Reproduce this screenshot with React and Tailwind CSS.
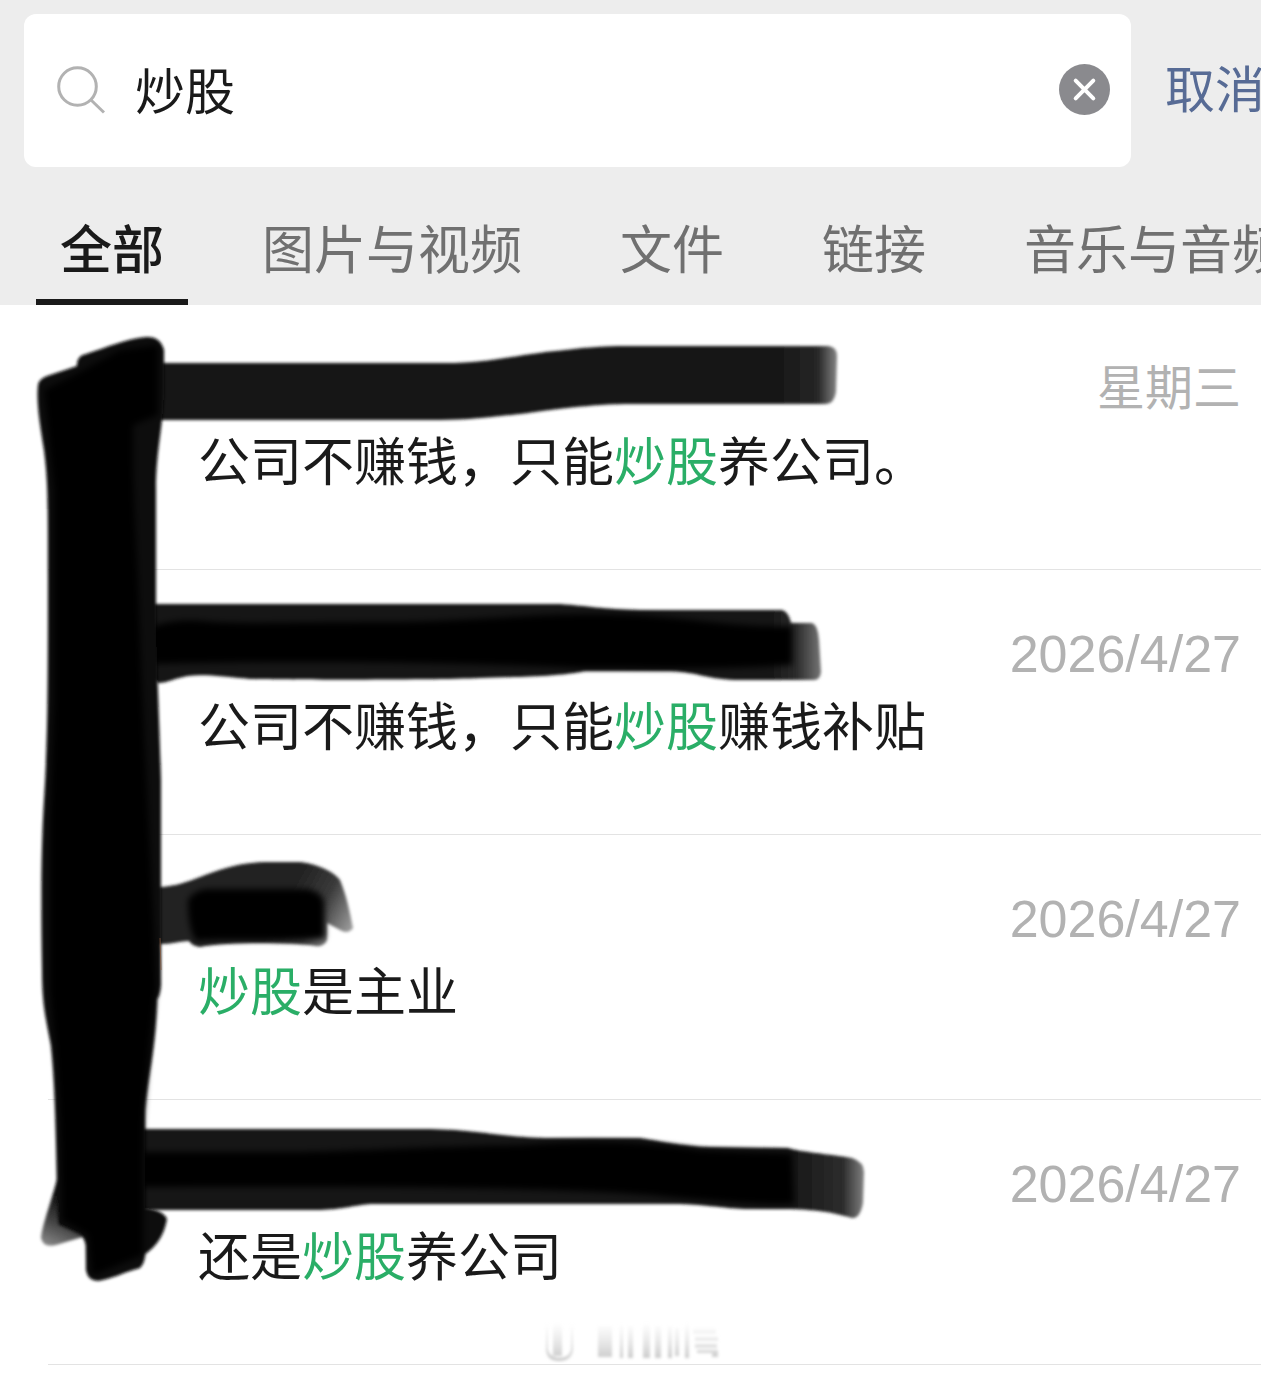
/**
 * Chat history search page
 */
import React, { useState } from 'react'
import clsx from 'clsx'

const TABS = ['全部', '图片与视频', '文件', '链接', '音乐与音频']

const RESULTS = [
  { id: 1, date: '星期三', text: '公司不赚钱，只能炒股养公司。' },
  { id: 2, date: '2026/4/27', text: '公司不赚钱，只能炒股赚钱补贴' },
  { id: 3, date: '2026/4/27', text: '炒股是主业' },
  { id: 4, date: '2026/4/27', text: '还是炒股养公司' },
]

const KEYWORD = '炒股'

function SearchIcon() {
  return (
    <svg className="w-12 h-12 shrink-0" viewBox="0 0 48 48" fill="none" stroke="#b2b2b2" strokeWidth="3" aria-hidden="true">
      <circle cx="20.5" cy="20.5" r="18.8" />
      <path d="M34 34 L47 46.5" />
    </svg>
  )
}

function ClearIcon() {
  return (
    <svg className="w-full h-full" viewBox="0 0 51 51" aria-hidden="true">
      <circle cx="25.5" cy="25.5" r="25.5" fill="#8a8a8e" />
      <path d="M16.7 16.7 L34.3 34.3 M34.3 16.7 L16.7 34.3" stroke="#fff" strokeWidth="4" strokeLinecap="round" />
    </svg>
  )
}

// Colours every occurrence of the keyword green
function Highlight({ text }) {
  const parts = text.split(KEYWORD)
  return parts.map((part, i) => (
    <React.Fragment key={i}>
      {i > 0 && <mark className="bg-transparent text-[#2aae67]">{KEYWORD}</mark>}
      {part}
    </React.Fragment>
  ))
}

// Marker strokes that hide avatars and names
function MarkerStrokes() {
  return (
    <svg
      className="absolute left-0 top-0 w-[1261px] h-[1068px] pointer-events-none"
      viewBox="0 305 1261 1068"
      aria-hidden="true"
    >
      <defs>
        <filter id="soft" x="-5%" y="-5%" width="110%" height="110%">
          <feGaussianBlur stdDeviation="1.6" />
        </filter>
        <filter id="softer" x="-20%" y="-20%" width="140%" height="140%">
          <feGaussianBlur stdDeviation="3" />
        </filter>
        <linearGradient id="fade1" gradientUnits="userSpaceOnUse" x1="770" y1="0" x2="838" y2="0">
          <stop offset="0" stopColor="#141414" />
          <stop offset="0.7" stopColor="#262626" />
          <stop offset="1" stopColor="#888" />
        </linearGradient>
        <linearGradient id="fade2" gradientUnits="userSpaceOnUse" x1="770" y1="0" x2="822" y2="0">
          <stop offset="0" stopColor="#161616" />
          <stop offset="0.5" stopColor="#2b2b2b" />
          <stop offset="1" stopColor="#777" />
        </linearGradient>
        <linearGradient id="fade3" gradientUnits="userSpaceOnUse" x1="290" y1="890" x2="352" y2="925">
          <stop offset="0" stopColor="#222" />
          <stop offset="0.5" stopColor="#3a3a3a" />
          <stop offset="1" stopColor="#999" />
        </linearGradient>
        <linearGradient id="fade4" gradientUnits="userSpaceOnUse" x1="790" y1="0" x2="866" y2="0">
          <stop offset="0" stopColor="#161616" />
          <stop offset="0.7" stopColor="#2d2d2d" />
          <stop offset="1" stopColor="#888" />
        </linearGradient>
        <linearGradient id="tail" gradientUnits="userSpaceOnUse" x1="46" y1="1246" x2="66" y2="1200">
          <stop offset="0" stopColor="#8a8a8a" />
          <stop offset="0.5" stopColor="#444" />
          <stop offset="1" stopColor="#111" />
        </linearGradient>
        <linearGradient id="smear" gradientUnits="userSpaceOnUse" x1="0" y1="1322" x2="0" y2="1360">
          <stop offset="0" stopColor="#ddd" stopOpacity="0" />
          <stop offset="1" stopColor="#c8c8c8" />
        </linearGradient>
      </defs>

      {/* name strokes */}
      <g filter="url(#soft)">
        <path fill="url(#fade1)" d="M140 363 H455 C500 361 520 354 565 350 C590 347 605 346 625 346 H828 Q838 347 837 358 L836 392 Q834 404 826 404 H625 C580 405 545 411 520 414 C490 417 470 420 440 420 H140 Z" />
        <path fill="url(#fade2)" d="M140 604 H560 C590 606 600 609 640 610 H782 Q789 612 791 623 H812 Q818 625 819 640 L821 672 Q820 680 814 680 H735 C705 679 695 671 665 671 H585 C560 677 510 677 480 678 C440 680 300 680 250 679 C225 677 205 674 188 676 C175 678 168 683 158 683 L140 670 Z" />
        <path fill="url(#fade3)" d="M145 888 C175 887 185 883 205 875 C230 866 245 862 270 862 H300 C318 864 334 872 340 880 C346 894 350 912 353 928 Q348 935 340 930 L327 923 V940 Q324 947 316 946 C290 942 225 942 200 947 Q192 946 189 941 C180 941 172 944 164 944 H145 Z" />
        <path fill="url(#fade4)" d="M130 1129 H430 C480 1130 500 1137 545 1138 H640 C660 1141 680 1146 710 1147 L788 1148 C800 1152 830 1154 852 1158 Q864 1162 864 1172 L863 1203 Q860 1219 852 1218 C835 1213 820 1210 790 1209 H745 C720 1208 710 1205 680 1204 H370 C350 1206 345 1209 320 1210 H130 Z" />
      </g>
      <g filter="url(#softer)" fill="#000">
        <path d="M140 632 C170 618 190 620 215 622 C250 624 300 622 400 622 C480 620 530 614 600 614 C680 614 720 628 792 626 V665 C700 670 640 668 580 668 C460 662 300 660 150 664 Z" />
        <path d="M188 900 Q192 892 205 889 H308 Q322 892 324 902 L325 938 C300 942 225 938 196 941 Q188 930 188 900 Z" />
        <path d="M130 1152 H300 C380 1150 420 1147 520 1145 C600 1139 650 1142 700 1150 L792 1153 L794 1204 C760 1206 720 1201 680 1198 C600 1188 420 1186 130 1187 Z" />
      </g>

      {/* avatar column */}
      <g filter="url(#soft)">
        <path fill="url(#tail)" d="M60 1165 C56 1190 43 1220 41 1238 Q43 1248 56 1245 L86 1236 L110 1190 Z" />
        <path fill="#0c0c0c" d="M38 385 Q39 378 50 375 L77 366 Q76 356 86 354 C108 347 125 339 146 337 Q160 336 164 350 V390 C163 430 156 450 156 490 V600 C156 660 159 700 161 780 V985 Q160 996 157 999 C156 1050 148 1075 145 1110 V1208 Q163 1210 167 1219 C164 1236 156 1247 145 1254 Q145 1263 140 1268 C122 1273 112 1279 98 1281 Q88 1281 86 1270 V1245 Q84 1236 78 1234 L58 1225 C56 1150 56 1090 51 1045 C46 1020 42 1005 42 970 C41 900 41 850 44 800 C48 740 48 680 48 580 C48 500 48 480 44 450 C41 430 36 405 38 385 Z" />
      </g>
      <path filter="url(#softer)" fill="#000" d="M44 390 L80 372 L120 350 L158 345 L158 415 L133 425 C132 500 138 560 139 610 C144 760 154 900 156 990 L150 1040 L143 1120 V1255 L92 1276 L88 1235 L62 1220 C62 1100 54 1040 50 990 V820 L54 700 V490 Z" />
      <path d="M160 938 L161 970" stroke="#8b5a3c" strokeWidth="1" opacity="0.7" />

      {/* washed-out stamp at the bottom */}
      <g filter="url(#soft)" fill="url(#smear)">
        <rect x="553" y="1322" width="9" height="34" />
        <path d="M546 1322 h2 v28 q3 8 11 8 q10 0 12 -8 v-28 h2 v28 q-2 11 -14 11 q-12 0 -13 -11 z" />
        <rect x="598" y="1326" width="14" height="31" />
        <rect x="620" y="1324" width="3" height="34" />
        <rect x="628" y="1326" width="5" height="32" />
        <rect x="643" y="1324" width="7" height="34" />
        <rect x="655" y="1326" width="6" height="32" />
        <rect x="668" y="1326" width="4" height="32" />
        <rect x="675" y="1328" width="4" height="28" />
        <rect x="685" y="1324" width="4" height="34" />
        <path d="M693 1329 h23 v5 h-23 z M695 1337 h23 v4 h-23 z M695 1344 h22 v4 h-22 z M697 1350 h21 v7 h-6 v-4 h-15 z" />
      </g>
    </svg>
  )
}

export default function App() {
  const [query, setQuery] = useState(KEYWORD)
  const [active, setActive] = useState(TABS[0])

  return (
    <div className="min-h-screen overflow-hidden bg-white text-[#1a1a1a] font-['Liberation_Sans','Noto_Sans_CJK_SC',sans-serif]">
      <header className="bg-[#ededed]">
        {/* Search bar */}
        <div className="flex items-center gap-[34px] pl-6 pt-[14px]">
          <label className="flex flex-1 min-w-0 items-center h-[153px] rounded-xl bg-white pl-[33px] pr-[21px] pb-[2px]">
            <SearchIcon />
            <input
              type="text"
              aria-label="搜索"
              value={query}
              onChange={(e) => setQuery(e.target.value)}
              className="flex-1 min-w-0 h-20 ml-[30px] pb-1 bg-transparent text-[50px] outline-none"
            />
            <button type="button" aria-label="清除" onClick={() => setQuery('')} className="w-[51px] h-[51px] shrink-0">
              <ClearIcon />
            </button>
          </label>
          <button type="button" className="w-24 shrink-0 whitespace-nowrap text-left text-[50px] leading-[72px] text-[#576b95]">
            取消
          </button>
        </div>

        {/* Filter tabs */}
        <div role="tablist" className="flex gap-[50px] pl-9 pt-12">
          {TABS.map((tab) => (
            <button
              key={tab}
              type="button"
              role="tab"
              aria-selected={active === tab}
              onClick={() => setActive(tab)}
              className={clsx(
                'shrink-0 px-6 pb-3 border-b-6 text-[52px] leading-[72px]',
                active === tab ? 'border-[#1a1a1a] font-medium' : 'border-transparent text-[#707070]'
              )}
            >
              {tab}
            </button>
          ))}
        </div>
      </header>

      <main className="relative">
        <ul>
          {RESULTS.map((item) => (
            <li key={item.id} className="ml-12 h-[265px] pt-[60px] pl-[150px] pr-5 border-b border-[#e3e3e3]">
              <div className={clsx('flex justify-end leading-[48px] text-[#b2b2b2]', item.date.includes('/') ? 'text-[52px]' : 'text-[48px]')}>
                <time>{item.date}</time>
              </div>
              <p className="mt-[14px] truncate text-[52px] leading-[72px]">
                <Highlight text={item.text} />
              </p>
            </li>
          ))}
        </ul>
        <MarkerStrokes />
      </main>
    </div>
  )
}
